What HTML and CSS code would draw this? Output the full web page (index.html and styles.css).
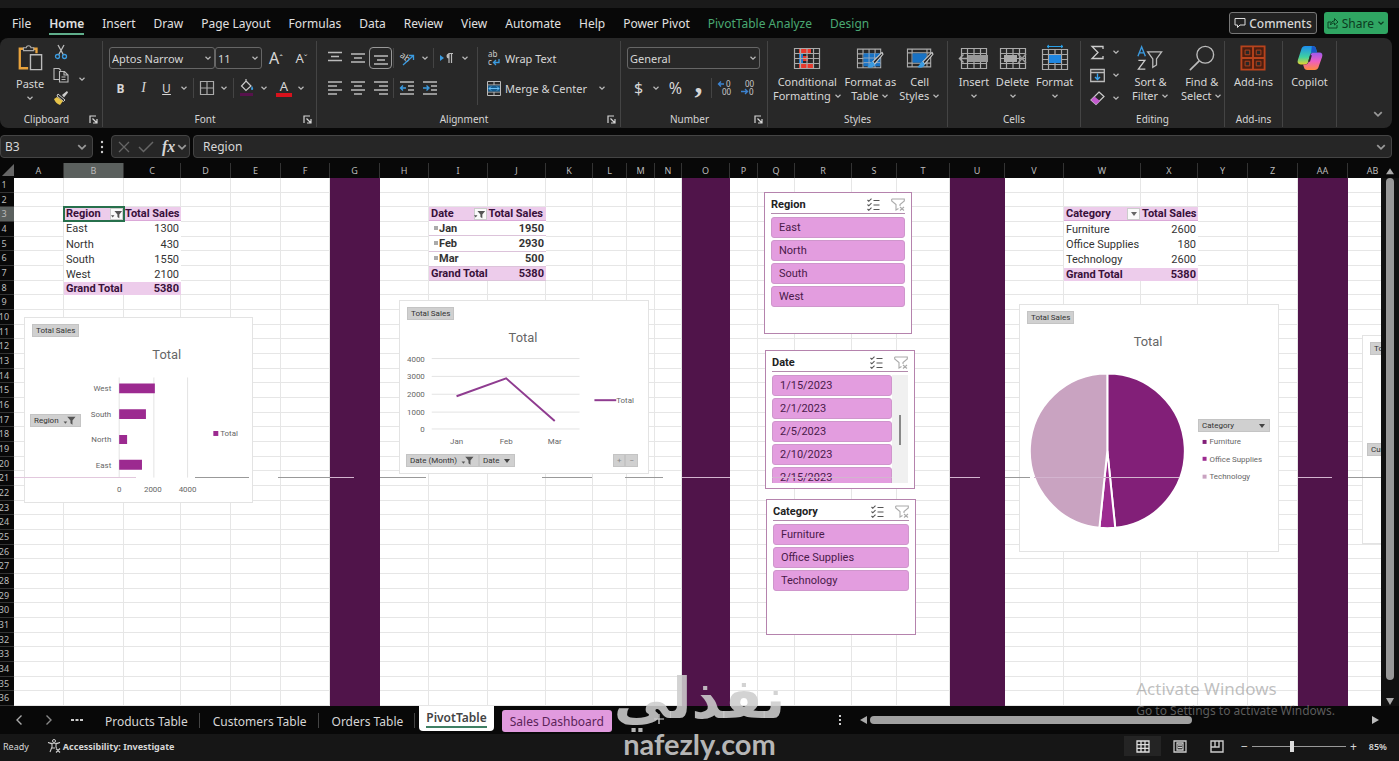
FILE: index.html
```html
<!DOCTYPE html>
<html lang="en">
<head>
  <meta charset="UTF-8">
  <meta name="viewport" content="width=device-width, initial-scale=1.0">
  <title>Sales workbook - PivotTable</title>
  <link rel="stylesheet" href="styles.css">
</head>
<body>
  <!-- Shared icons -->
  <svg class="sprite" aria-hidden="true">
    <symbol id="chev" viewBox="0 0 8 8"><path d="M1.5 2.8 4 5.2l2.5-2.4" fill="none" stroke="currentColor" stroke-width="1.2"/></symbol>
    <symbol id="launcher" viewBox="0 0 9 9"><path d="M1 8V1h6M3.5 3.5 7.5 7.5M8 4v4H4" fill="none" stroke="currentColor" stroke-width="1.2"/></symbol>
    <symbol id="funnel" viewBox="0 0 14 12"><path d="M4 2h9L9.700 6v4.500L7.500 9V6z" fill="#555"/><path d="M0 7h4L2 9.500z" fill="#555"/></symbol>
    <symbol id="multi" viewBox="0 0 14 13"><path d="m1 2 1.300 1.300L5 .7M1 6.500l1.300 1.300L5 5.200M1 11l1.300 1.300L5 9.700M7 2.500h6M7 7h6M7 11.500h6" fill="none" stroke="#555" stroke-width="1.100"/></symbol>
    <symbol id="clear" viewBox="0 0 14 13"><path d="M.7 1h12.600v2L9 6.500V8M.7 1v2L5 6.500V12l2.500-1.500M9 9l4 3.500M13 9l-4 3.500" fill="none" stroke="#aaa" stroke-width="1.100"/></symbol>
    <symbol id="table" viewBox="0 0 28 24"><path d="M1.500 2.500h25v20h-25zM1.500 7.500h25M1.500 12.500h25M1.500 17.500h25M7.500 2.500v20M14 2.500v20M20.500 2.500v20" fill="none" stroke="#aaa" stroke-width="1.200"/></symbol>
    <symbol id="brush" viewBox="0 0 20 20"><path d="M18 1 8 11l2 2.500L19 3z" fill="#282828" stroke="#ccc" stroke-width="1.200"/><path d="M8 11c-3 0-3 4-6 5.500 3 2 8 1 8-3z" fill="#3b9be0"/></symbol>
  </svg>

  <div class="title-strip"></div>

  <header class="menu-bar">
    <nav class="menu">
      <button>File</button>
      <button class="current">Home</button>
      <button>Insert</button>
      <button>Draw</button>
      <button>Page Layout</button>
      <button>Formulas</button>
      <button>Data</button>
      <button>Review</button>
      <button>View</button>
      <button>Automate</button>
      <button>Help</button>
      <button>Power Pivot</button>
      <button class="context">PivotTable Analyze</button>
      <button class="context">Design</button>
    </nav>
    <button class="comments">
      <svg width="12" height="12" viewBox="0 0 12 12"><path d="M1 1.500h10v6.500H6L3.500 10.500V8H1z" fill="none" stroke="#ddd"/></svg>
      Comments
    </button>
    <button class="share">
      <svg width="12" height="12" viewBox="0 0 12 12"><path d="M4 5H1v6h9V8M3.500 8c0-3 2-4 4-4V1.500L11 5 7.500 8V6c-2 0-3 .5-4 2z" fill="none" stroke="#0c4424"/></svg>
      Share
      <svg class="chev"><use href="#chev"/></svg>
    </button>
  </header>

  <section class="ribbon">
    <div class="group clipboard">
      <div class="tools">
        <button class="big">
          <svg width="28" height="28" viewBox="0 0 28 28"><path d="M12 25H3V4h4M17 4h4v5" fill="none" stroke="#e8a33d" stroke-width="2.500"/><path d="M7 6V3h3c0-3 5-3 5 0h3v3z" fill="#282828" stroke="#aaa" stroke-width="1.200"/><path d="M14.500 10.500h12v16h-12z" fill="#282828" stroke="#bbb" stroke-width="1.500"/></svg>
          <span>Paste</span>
          <svg class="chev"><use href="#chev"/></svg>
        </button>
        <div class="stack">
          <button aria-label="Cut"><svg width="16" height="16" viewBox="0 0 16 16"><path d="M5 1l5.500 10M11 1 5.500 11" stroke="#bbb" stroke-width="1.300" fill="none"/><circle cx="4.500" cy="12.500" r="2" fill="none" stroke="#3b9be0" stroke-width="1.300"/><circle cx="11.500" cy="12.500" r="2" fill="none" stroke="#3b9be0" stroke-width="1.300"/></svg></button>
          <button aria-label="Copy"><svg width="16" height="16" viewBox="0 0 16 16"><path d="M6 12.500H1v-11h5l2 2M6.500 4.500h5l3.500 3.500v7H6.500zM11 4.500V8h4M8.500 10h4M8.500 12.500h4" fill="none" stroke="#bbb" stroke-width="1.100"/></svg></button>
          <button aria-label="Format Painter"><svg width="16" height="16" viewBox="0 0 16 16"><path d="m9 5 5-4 1 1.500-4 5z" fill="#ccc"/><path d="m5 4 7 6-1.500 1.500L4 6z" fill="none" stroke="#ccc"/><path d="M4 7 1 9c1 3 3 5 6 6l3-4z" fill="#e6c34a"/></svg></button>
        </div>
        <button class="drop" aria-label="Copy options"><svg class="chev"><use href="#chev"/></svg></button>
      </div>
      <div class="group-name"><span>Clipboard</span><svg class="launcher"><use href="#launcher"/></svg></div>
    </div>

    <div class="group font">
      <div class="tools rows">
        <div class="row">
          <label class="combo font-name"><select aria-label="Font"><option>Aptos Narrow</option></select><svg class="chev"><use href="#chev"/></svg></label>
          <label class="combo font-size"><select aria-label="Font size"><option>11</option></select><svg class="chev"><use href="#chev"/></svg></label>
          <button class="tool grow">A<sup>ˆ</sup></button>
          <button class="tool shrink">A<sup>ˇ</sup></button>
        </div>
        <div class="row">
          <button class="tool"><b>B</b></button>
          <button class="tool serif"><i>I</i></button>
          <button class="tool"><u>U</u></button>
          <svg class="chev"><use href="#chev"/></svg>
          <span class="sep"></span>
          <button class="tool" aria-label="Borders"><svg width="16" height="16" viewBox="0 0 16 16"><path d="M1.500 1.500h13v13h-13zM8 1.500v13M1.500 8h13" fill="none" stroke="#aaa" stroke-width="1.200"/></svg></button>
          <svg class="chev"><use href="#chev"/></svg>
          <span class="sep"></span>
          <button class="tool" aria-label="Fill color"><svg width="16" height="18" viewBox="0 0 16 18"><path d="m7 2 5 5-5 4.500L2.500 7zM7 2V0" fill="none" stroke="#ccc" stroke-width="1.200"/><path d="M13 7c2 3 1 4 0 4s-1.500-1 0-4z" fill="#3b9be0"/><path d="M1 14h13v3H1z" fill="#57124c"/></svg></button>
          <svg class="chev"><use href="#chev"/></svg>
          <button class="tool font-color">A</button>
          <svg class="chev"><use href="#chev"/></svg>
        </div>
      </div>
      <div class="group-name"><span>Font</span><svg class="launcher"><use href="#launcher"/></svg></div>
    </div>

    <div class="group alignment">
      <div class="tools">
        <div class="rows">
          <div class="row">
            <button class="tool" aria-label="Top align"><svg width="16" height="16" viewBox="0 0 16 16"><path d="M1 2.500h14M4 6.500h8M1 10.500h14" stroke="#bbb" stroke-width="1.300"/></svg></button>
            <button class="tool" aria-label="Middle align"><svg width="16" height="16" viewBox="0 0 16 16"><path d="M1 4h14M4 8h8M1 12h14" stroke="#bbb" stroke-width="1.300"/></svg></button>
            <button class="tool pressed" aria-label="Bottom align"><svg width="16" height="16" viewBox="0 0 16 16"><path d="M1 6h14M4 10h8M1 14h14" stroke="#bbb" stroke-width="1.300"/></svg></button>
            <span class="sep"></span>
            <button class="tool" aria-label="Orientation"><svg width="18" height="16" viewBox="0 0 18 16"><text x="2" y="8" font-size="9" fill="#ccc" transform="rotate(35 4 6)">ab</text><path d="m5 15 10-9M11 5.500h4.500V10" fill="none" stroke="#3b9be0" stroke-width="1.300"/></svg></button>
            <svg class="chev"><use href="#chev"/></svg>
            <span class="sep"></span>
            <button class="tool" aria-label="Text direction"><svg width="16" height="14" viewBox="0 0 16 14"><path d="m1 4 4 3-4 3z" fill="#3b9be0"/><path d="M10 2.500a2.500 2.500 0 0 0 0 5z" fill="#bbb"/><path d="M14 2.500h-4V12M12.500 3v9" stroke="#bbb" fill="none" stroke-width="1.200"/></svg></button>
            <svg class="chev"><use href="#chev"/></svg>
          </div>
          <div class="row">
            <button class="tool" aria-label="Align left"><svg width="16" height="16" viewBox="0 0 16 16"><path d="M1 2h14M1 6h9M1 10h14M1 14h9" stroke="#bbb" stroke-width="1.300"/></svg></button>
            <button class="tool" aria-label="Center"><svg width="16" height="16" viewBox="0 0 16 16"><path d="M1 2h14M4 6h8M1 10h14M4 14h8" stroke="#bbb" stroke-width="1.300"/></svg></button>
            <button class="tool" aria-label="Align right"><svg width="16" height="16" viewBox="0 0 16 16"><path d="M1 2h14M6 6h9M1 10h14M6 14h9" stroke="#bbb" stroke-width="1.300"/></svg></button>
            <span class="sep"></span>
            <button class="tool" aria-label="Decrease indent"><svg width="16" height="16" viewBox="0 0 16 16"><path d="M1 2h14M9 6h6M9 10h6M1 14h14" stroke="#bbb" stroke-width="1.300"/><path d="M7 8H2M4 5.500 1.500 8 4 10.500" fill="none" stroke="#3b9be0" stroke-width="1.400"/></svg></button>
            <button class="tool" aria-label="Increase indent"><svg width="16" height="16" viewBox="0 0 16 16"><path d="M1 2h14M9 6h6M9 10h6M1 14h14" stroke="#bbb" stroke-width="1.300"/><path d="M1 8h5M4.500 5.500 7 8l-2.500 2.500" fill="none" stroke="#3b9be0" stroke-width="1.400"/></svg></button>
          </div>
        </div>
        <span class="sep tall"></span>
        <div class="rows wide">
          <div class="row">
            <button class="text-tool"><svg width="14" height="16" viewBox="0 0 14 16"><text x="1" y="7" font-size="8" fill="#ccc">ab</text><text x="1" y="15" font-size="8" fill="#ccc">c</text><path d="M12 9v3.500H7M9 10l-2.500 2.500L9 15" fill="none" stroke="#3b9be0" stroke-width="1.300"/></svg>Wrap Text</button>
          </div>
          <div class="row">
            <button class="text-tool"><svg width="14" height="15" viewBox="0 0 14 15"><path d="M.5.5h13v14H.5zM.5 4h13M.5 11h13M7 .5V4M7 11v3.500" fill="none" stroke="#bbb"/><path d="M1 4.500h12v6H1z" fill="#155a8c"/><path d="M2 7.500h10M4 5.500l-2 2 2 2M10 5.500l2 2-2 2" fill="none" stroke="#6cc0f5"/></svg>Merge &amp; Center</button>
            <svg class="chev"><use href="#chev"/></svg>
          </div>
        </div>
      </div>
      <div class="group-name"><span>Alignment</span><svg class="launcher"><use href="#launcher"/></svg></div>
    </div>

    <div class="group number">
      <div class="tools rows">
        <div class="row">
          <label class="combo number-format"><select aria-label="Number format"><option>General</option></select><svg class="chev"><use href="#chev"/></svg></label>
        </div>
        <div class="row">
          <button class="tool symbol">$</button>
          <svg class="chev"><use href="#chev"/></svg>
          <button class="tool symbol">%</button>
          <button class="tool comma">,</button>
          <span class="sep"></span>
          <button class="tool" aria-label="Increase decimal"><svg width="16" height="16" viewBox="0 0 16 16"><text x="9" y="7" font-size="8" fill="#ccc">0</text><text x="5" y="15" font-size="8" fill="#ccc">00</text><path d="M7 4H1.500M4 1.500 1.500 4 4 6.500" fill="none" stroke="#3b82d0" stroke-width="1.400"/></svg></button>
          <button class="tool" aria-label="Decrease decimal"><svg width="16" height="16" viewBox="0 0 16 16"><text x="5" y="7" font-size="8" fill="#ccc">00</text><text x="9" y="15" font-size="8" fill="#ccc">0</text><path d="M1 11.500h6M5 9l2.500 2.500L5 14" fill="none" stroke="#3b82d0" stroke-width="1.400"/></svg></button>
        </div>
      </div>
      <div class="group-name"><span>Number</span><svg class="launcher"><use href="#launcher"/></svg></div>
    </div>

    <div class="group styles">
      <div class="tools">
        <button class="big">
          <svg width="28" height="24" viewBox="0 0 28 24"><path d="M6 3h12v5H6zM6 17h14v5H6z" fill="#e8392c"/><path d="M6 8h4v9H6z" fill="#1f7ad0"/><path d="M10 10h5v5h-5z" fill="#e8392c"/><use href="#table" width="28" height="24"/></svg>
          <span>Conditional<br>Formatting <svg class="chev"><use href="#chev"/></svg></span>
        </button>
        <button class="big">
          <svg width="30" height="28" viewBox="0 0 30 28"><use href="#table" width="28" height="24" y="2"/><path d="M8 9h18v14H8z" fill="#1872c4"/><path d="M14 9v14M20 9v14M8 14h18M8 19h18" stroke="#9ab" fill="none"/><use href="#brush" x="10" y="7" width="20" height="20"/></svg>
          <span>Format as<br>Table <svg class="chev"><use href="#chev"/></svg></span>
        </button>
        <button class="big">
          <svg width="30" height="28" viewBox="0 0 30 28"><path d="M1.500 4.500h25v19h-25zM1.500 8.500h25M1.500 19.500h25M6.500 4.500v19M22.500 4.500v19" stroke="#aaa" fill="none" stroke-width="1.200"/><path d="M7 9h15v10H7z" fill="#1872c4"/><use href="#brush" x="10" y="7" width="20" height="20"/></svg>
          <span>Cell<br>Styles <svg class="chev"><use href="#chev"/></svg></span>
        </button>
      </div>
      <div class="group-name"><span>Styles</span></div>
    </div>

    <div class="group cells">
      <div class="tools">
        <button class="big">
          <svg width="30" height="24" viewBox="0 0 30 24"><use href="#table" width="28" height="24" x="1"/><path d="M9 9h20v7H9z" fill="#999"/><path d="M9 12.500H1M4.500 8.500l-4 4 4 4" fill="none" stroke="#aaa" stroke-width="1.500"/></svg>
          <span>Insert</span><svg class="chev"><use href="#chev"/></svg>
        </button>
        <button class="big">
          <svg width="28" height="24" viewBox="0 0 28 24"><use href="#table" width="28" height="24"/><path d="M5 9h13v7H5z" fill="#aaa"/><path d="m19 8 8 9M27 8l-8 9" stroke="#999" stroke-width="1.500"/></svg>
          <span>Delete</span><svg class="chev"><use href="#chev"/></svg>
        </button>
        <button class="big">
          <svg width="28" height="26" viewBox="0 0 28 26"><use href="#table" width="28" height="24" y="2"/><path d="M8 10h12v8H8z" fill="#1f86e0"/><path d="M6 1.500h16M8 0 6 1.500 8 3M20 0l2 1.500L20 3" stroke="#2aa0e8" fill="none"/></svg>
          <span>Format</span><svg class="chev"><use href="#chev"/></svg>
        </button>
      </div>
      <div class="group-name"><span>Cells</span></div>
    </div>

    <div class="group editing">
      <div class="tools">
        <div class="stack pairs">
          <button aria-label="AutoSum"><svg width="15" height="15" viewBox="0 0 15 15"><path d="M13 4V1.500H2L8 7.500 2 13.500h11V11" fill="none" stroke="#ccc" stroke-width="1.300"/></svg><svg class="chev"><use href="#chev"/></svg></button>
          <button aria-label="Fill"><svg width="15" height="15" viewBox="0 0 15 15"><path d="M.7 1.500h13.600v12H.7zM.7 4.500h13.600" fill="none" stroke="#bbb" stroke-width="1.300"/><path d="M7.500 5.500v6M5 9l2.500 2.500L10 9" fill="none" stroke="#3ba4ee" stroke-width="1.400"/></svg><svg class="chev"><use href="#chev"/></svg></button>
          <button aria-label="Clear"><svg width="15" height="15" viewBox="0 0 15 15"><path d="m9 1 5 4.500-8 8L1 9z" fill="none" stroke="#ccc" stroke-width="1.200"/><path d="M4.500 5.500 10 10l-4 3.500L1 9z" fill="#c45bd0"/></svg><svg class="chev"><use href="#chev"/></svg></button>
        </div>
        <button class="big">
          <svg width="28" height="28" viewBox="0 0 28 28"><path d="m1 12 4-10 4 10M2.500 8.500h5" fill="none" stroke="#3b9be0" stroke-width="1.500"/><path d="M1.500 16.500h7L1.500 26H9" fill="none" stroke="#ccc" stroke-width="1.400"/><path d="M11.500 7.500h15L21 15v6.500l-4 2.500v-9z" fill="none" stroke="#bbb" stroke-width="1.400"/></svg>
          <span>Sort &amp;<br>Filter <svg class="chev"><use href="#chev"/></svg></span>
        </button>
        <button class="big">
          <svg width="28" height="28" viewBox="0 0 28 28"><circle cx="17.500" cy="10.500" r="9" fill="none" stroke="#bbb" stroke-width="1.500"/><path d="M11 17 1 27" stroke="#bbb" stroke-width="1.800"/></svg>
          <span>Find &amp;<br>Select <svg class="chev"><use href="#chev"/></svg></span>
        </button>
      </div>
      <div class="group-name"><span>Editing</span></div>
    </div>

    <div class="group addins">
      <div class="tools">
        <button class="big">
          <svg width="28" height="28" viewBox="0 0 28 28"><path d="M1.500 1.500h25v25h-25zM14 1.500v25M1.500 14h25" fill="#4a1e10" stroke="#b8431c" stroke-width="2"/><path d="M5.500 5.500h5v5h-5zM17.500 5.500h5v5h-5zM5.500 17.500h5v5h-5zM17.500 17.500h5v5h-5z" fill="#282828" stroke="#b8431c"/></svg>
          <span>Add-ins</span>
        </button>
      </div>
      <div class="group-name"><span>Add-ins</span></div>
    </div>

    <div class="group copilot">
      <div class="tools">
        <button class="big">
          <svg width="28" height="28" viewBox="0 0 28 28">
            <defs>
              <linearGradient id="cool" x1="0" y1="0" x2="0" y2="1"><stop offset="0" stop-color="#1c8df0"/><stop offset=".6" stop-color="#3fd0a0"/><stop offset="1" stop-color="#e8d22c"/></linearGradient>
              <linearGradient id="warm" x1="0" y1="0" x2="0" y2="1"><stop offset="0" stop-color="#9a5af0"/><stop offset=".5" stop-color="#ee5ec0"/><stop offset="1" stop-color="#ff8a3c"/></linearGradient>
            </defs>
            <path d="M9 1h8c2 0 3 1 3.500 3l1 4h-4c-2 0-3 1-3.500 3l-2 7c-.5 2-1.500 3-3.500 3H4c-3 0-4-2-3-5L4.500 5C5 2.500 6.500 1 9 1z" fill="url(#cool)"/>
            <path d="M19 27h-8c-2 0-3-1-3.500-3l-1-3H9c2 0 3-1 3.500-3l2-7c.5-2 1.500-3 3.500-3h6c3 0 4 2 3 5l-3.500 10c-.5 2.500-2 4-4.500 4z" fill="url(#warm)"/>
            <path d="M16 1c3 0 4 1 4.500 3l1 4H18c-2 0-2.500 0-3 1z" fill="#1958c8"/>
            <path d="m14 11 2 0-2 7h-2z" fill="#282828"/>
          </svg>
          <span>Copilot</span>
        </button>
      </div>
      <div class="group-name"></div>
    </div>
    <button class="collapse" aria-label="Collapse ribbon"><svg class="chev"><use href="#chev"/></svg></button>
  </section>

  <section class="formula-bar">
    <label class="name-box"><input type="text" value="B3" aria-label="Name box"><svg class="chev"><use href="#chev"/></svg></label>
    <svg width="4" height="14" viewBox="0 0 4 14" fill="#ccc"><circle cx="2" cy="2" r="1.200"/><circle cx="2" cy="7" r="1.200"/><circle cx="2" cy="12" r="1.200"/></svg>
    <div class="fx">
      <button aria-label="Cancel"><svg width="12" height="12" viewBox="0 0 12 12"><path d="m1 1 10 10M11 1 1 11" stroke="#666" stroke-width="1.300"/></svg></button>
      <button aria-label="Enter"><svg width="16" height="12" viewBox="0 0 16 12"><path d="m1 6 4.500 4.500L15 1" fill="none" stroke="#666" stroke-width="1.500"/></svg></button>
      <button class="fx-sign"><i>fx</i></button>
      <svg class="chev"><use href="#chev"/></svg>
    </div>
    <label class="formula"><input type="text" value="Region" aria-label="Formula"><svg class="chev"><use href="#chev"/></svg></label>
  </section>

  <main class="workbook">
    <div class="head-row">
      <div class="corner"></div>
      <div class="col-heads" id="col-heads"></div>
      <div class="scroll-up"></div>
    </div>
    <div class="body-row">
      <div class="row-heads" id="row-heads"></div>
      <div class="sheet">
        <div class="cells-grid" id="cells-grid">
          <table class="pivot by-region">
            <thead><tr><th class="active">Region <button class="filter" aria-label="Filter region"><svg width="12" height="11"><use href="#funnel"/></svg></button></th><th>Total Sales</th></tr></thead>
            <tbody>
              <tr><td>East</td><td>1300</td></tr>
              <tr><td>North</td><td>430</td></tr>
              <tr><td>South</td><td>1550</td></tr>
              <tr><td>West</td><td>2100</td></tr>
            </tbody>
            <tfoot><tr><td>Grand Total</td><td>5380</td></tr></tfoot>
          </table>

          <table class="pivot by-date">
            <thead><tr><th>Date <button class="filter" aria-label="Filter date"><svg width="12" height="11"><use href="#funnel"/></svg></button></th><th>Total Sales</th></tr></thead>
            <tbody>
              <tr><td><span class="expand"></span>Jan</td><td>1950</td></tr>
              <tr><td><span class="expand"></span>Feb</td><td>2930</td></tr>
              <tr><td><span class="expand"></span>Mar</td><td>500</td></tr>
            </tbody>
            <tfoot><tr><td>Grand Total</td><td>5380</td></tr></tfoot>
          </table>

          <table class="pivot by-category">
            <thead><tr><th>Category <button class="filter" aria-label="Filter category"><svg width="8" height="6" viewBox="0 0 8 6"><path d="M1 1h6L4 5z" fill="#666"/></svg></button></th><th>Total Sales</th></tr></thead>
            <tbody>
              <tr><td>Furniture</td><td>2600</td></tr>
              <tr><td>Office Supplies</td><td>180</td></tr>
              <tr><td>Technology</td><td>2600</td></tr>
            </tbody>
            <tfoot><tr><td>Grand Total</td><td>5380</td></tr></tfoot>
          </table>
        </div>

        <!-- Floating charts -->
        <figure class="chart bar-chart">
          <svg viewBox="0 0 229 185">
            <text class="title" x="143" y="41">Total</text>
            <path class="axis" d="M95 60v101M130 60v101M164 60v101"/>
            <g fill="#9c2a90"><path d="M95 66h36v10H95zM95 92h27v10H95zM95 118h8v9h-8zM95 143h23v10H95z"/><path d="M190 114h5v5h-5z"/></g>
            <g text-anchor="end"><text x="87" y="74">West</text><text x="87" y="100">South</text><text x="87" y="125">North</text><text x="87" y="151">East</text></g>
            <g text-anchor="middle"><text x="95" y="176">0</text><text x="129" y="176">2000</text><text x="164" y="176">4000</text></g>
            <text x="197" y="119">Total</text>
          </svg>
          <button class="field at-top">Total Sales</button>
          <button class="field region-field">Region <svg width="14" height="11"><use href="#funnel"/></svg></button>
        </figure>

        <figure class="chart line-chart">
          <svg viewBox="0 0 250 174">
            <text class="title" x="124" y="41">Total</text>
            <path class="axis" d="M32 58h149M32 76h149M32 94h149M32 112h149M32 129h149"/>
            <path d="m57 96 50-18 49 43" fill="none" stroke="#8f3c90" stroke-width="2"/>
            <path d="M196 100h22" stroke="#8f3c90" stroke-width="2"/>
            <g text-anchor="end"><text x="25" y="61">4000</text><text x="25" y="79">3000</text><text x="25" y="97">2000</text><text x="25" y="115">1000</text><text x="25" y="132">0</text></g>
            <g text-anchor="middle"><text x="57" y="144">Jan</text><text x="107" y="144">Feb</text><text x="156" y="144">Mar</text></g>
            <text x="218" y="103">Total</text>
          </svg>
          <button class="field at-top">Total Sales</button>
          <div class="fields">
            <button class="field">Date (Month) <svg width="14" height="11"><use href="#funnel"/></svg></button>
            <button class="field">Date <svg width="8" height="6" viewBox="0 0 8 6"><path d="M1 1h6L4 5z" fill="#444"/></svg></button>
            <button class="field dim">+</button><button class="field dim">−</button>
          </div>
        </figure>

        <figure class="chart pie-chart">
          <svg viewBox="0 0 260 248">
            <text class="title" x="129" y="41">Total</text>
            <g stroke="#fff" stroke-width="2">
              <path d="M88 147V69a78 78 0 0 1 8 155.600z" fill="#821f78"/>
              <path d="M88 147 96 224.600a78 78 0 0 1-16 0z" fill="#9c2a90"/>
              <path d="M88 147 80 224.600A78 78 0 0 1 88 69z" fill="#c9a3c1"/>
            </g>
            <path d="M184 136h4v4h-4z" fill="#821f78"/><path d="M184 153h4v4h-4z" fill="#9c2a90"/><path d="M184 171h4v4h-4z" fill="#c9a3c1"/>
            <text x="191" y="140">Furniture</text><text x="191" y="158">Office Supplies</text><text x="191" y="175">Technology</text>
          </svg>
          <button class="field at-top">Total Sales</button>
          <button class="field category-field">Category <svg width="8" height="6" viewBox="0 0 8 6"><path d="M1 1h6L4 5z" fill="#444"/></svg></button>
        </figure>

        <figure class="chart next-chart">
          <button class="field at-top">Total Sales</button>
          <button class="field customer-field">Customer</button>
        </figure>

        <!-- Slicers -->
        <section class="slicer region-slicer">
          <header><h2>Region</h2><button aria-label="Multi-select"><svg width="15" height="13"><use href="#multi"/></svg></button><button aria-label="Clear filter"><svg width="14" height="13"><use href="#clear"/></svg></button></header>
          <div class="choices">
            <button>East</button><button>North</button><button>South</button><button>West</button>
          </div>
        </section>
        <section class="slicer date-slicer">
          <header><h2>Date</h2><button aria-label="Multi-select"><svg width="15" height="13"><use href="#multi"/></svg></button><button aria-label="Clear filter"><svg width="14" height="13"><use href="#clear"/></svg></button></header>
          <div class="scroller">
            <div class="choices">
              <button>1/15/2023</button><button>2/1/2023</button><button>2/5/2023</button><button>2/10/2023</button><button>2/15/2023</button>
            </div>
            <div class="track"><span></span></div>
          </div>
        </section>
        <section class="slicer category-slicer">
          <header><h2>Category</h2><button aria-label="Multi-select"><svg width="15" height="13"><use href="#multi"/></svg></button><button aria-label="Clear filter"><svg width="14" height="13"><use href="#clear"/></svg></button></header>
          <div class="choices">
            <button>Furniture</button><button>Office Supplies</button><button>Technology</button>
          </div>
        </section>

        <!-- Page break line under row 21 -->
        <svg class="page-break" viewBox="0 0 1367 1" preserveAspectRatio="none">
          <path d="M0 0h122" stroke="#e2c8dd"/>
          <path d="M181 0h54M264 0h52M366 0h46M528 0h50M611 0h38M991 0h25M1334 0h33" stroke="#999"/>
          <path d="M316 0h24M668 0h48M758 0h120M936 0h30M1020 0h145M1284 0h34" stroke="#d3b4cf"/>
        </svg>
      </div>
      <div class="v-scroll"><span class="thumb"></span><span class="arrow-down"></span></div>
    </div>
  </main>

  <nav class="sheet-tabs">
    <button class="step" aria-label="Previous sheet"><svg width="8" height="12" viewBox="0 0 8 12"><path d="M6.500 1.500 2 6l4.500 4.500" fill="none" stroke="#aaa" stroke-width="1.400"/></svg></button>
    <button class="step" aria-label="Next sheet"><svg width="8" height="12" viewBox="0 0 8 12"><path d="M1.500 1.500 6 6l-4.500 4.500" fill="none" stroke="#888" stroke-width="1.400"/></svg></button>
    <button class="more" aria-label="More sheets"><svg width="12" height="12" viewBox="0 0 12 12" fill="#ccc"><path d="M0 5h3v2H0zM4.500 5h3v2h-3zM9 5h3v2H9z"/></svg></button>
    <button class="tab">Products Table</button>
    <button class="tab">Customers Table</button>
    <button class="tab">Orders Table</button>
    <button class="tab open"><span>PivotTable</span></button>
    <button class="tab pink">Sales Dashboard</button>
    <button class="add" aria-label="New sheet"><svg width="12" height="12" viewBox="0 0 12 12"><path d="M6 1v10M1 6h10" stroke="#ddd" stroke-width="1.200"/></svg></button>
    <div class="h-scroll">
      <svg width="4" height="12" viewBox="0 0 4 12" fill="#ccc"><path d="M1 1h2v2H1zM1 5h2v2H1zM1 9h2v2H1z"/></svg>
      <span class="arrow-left"></span>
      <span class="track"><span class="thumb"></span></span>
      <span class="arrow-right"></span>
    </div>
  </nav>

  <footer class="status-bar">
    <span>Ready</span>
    <button class="access">
      <svg width="14" height="14" viewBox="0 0 14 14"><circle cx="7" cy="2" r="1.500" fill="none" stroke="#ccc"/><path d="M1 3.500 5 5v3l-2 5M13 3.500 9 5v3l.5 1M1 3.500c3 1 9 1 12 0M9 9.500l4 4M13 9.500l-4 4M5 9h3" fill="none" stroke="#ccc" stroke-width="1.100"/></svg>
      Accessibility: Investigate
    </button>
    <div class="views">
      <button class="on" aria-label="Normal"><svg width="14" height="13" viewBox="0 0 14 13"><path d="M1 1h12v11H1zM5 1v11M9 1v11M1 4.700h12M1 8.300h12" fill="none" stroke="#ddd" stroke-width="1.300"/></svg></button>
      <button aria-label="Page Layout"><svg width="14" height="13" viewBox="0 0 14 13"><path d="M1 1h12v11H1zM4 3h6v7H4zM5 5h4M5 7.500h4" fill="none" stroke="#ccc" stroke-width="1.300"/></svg></button>
      <button aria-label="Page Break Preview"><svg width="14" height="13" viewBox="0 0 14 13"><path d="M1 1h12v11H1zM5 1v6M9 1v6H1" fill="none" stroke="#ccc" stroke-width="1.400"/></svg></button>
    </div>
    <div class="zoom">
      <button aria-label="Zoom out">−</button>
      <input type="range" min="0" max="100" value="42" aria-label="Zoom">
      <button aria-label="Zoom in">+</button>
      <output>85%</output>
    </div>
  </footer>

  <div class="activate">
    <p>Activate Windows</p>
    <p class="small">Go to Settings to activate Windows.</p>
  </div>
  <div class="watermark">
    <span class="arabic" lang="ar" dir="rtl">نفذلي</span>
    <span class="latin">nafezly.com</span>
  </div>

  <script src="script.js"></script>
</body>
</html>
```
FILE: styles.css
```css
* {
  box-sizing: border-box;
}

body {
  margin: 0;
  height: 100vh;
  display: flex;
  flex-direction: column;
  overflow: hidden;
  background: #080808;
  color: #d6d6d6;
  font-family: "Noto Sans", "Open Sans", sans-serif;
  font-size: 12px;
}

button, input, select {
  font: inherit;
  color: inherit;
  background: none;
  border: 0;
  padding: 0;
  margin: 0;
}

button {
  white-space: nowrap;
}

svg {
  flex: none;
  overflow: visible;
}

.sprite {
  position: absolute;
  width: 0;
  height: 0;
}

.chev {
  width: 8px;
  height: 8px;
  color: #bbb;
}

/* Menu */
.title-strip {
  height: 8px;
  background: #1a1a1a;
}

.menu-bar {
  display: flex;
  align-items: center;
  height: 30px;
  padding: 0 11px 0 12px;
}

.menu {
  display: flex;
  flex: 1;
  gap: 18px;
}

.menu button {
  height: 24px;
  padding-top: 3px;
  color: #e0e0e0;
  border-bottom: 2px solid transparent;
}

.menu .current {
  font-weight: 600;
  border-color: #5fae8b;
}

.menu .context {
  color: #4aa873;
}

.comments, .share {
  display: flex;
  align-items: center;
  gap: 3px;
  height: 22px;
  border-radius: 3px;
}

.comments {
  padding: 0 4px;
  margin-right: 7px;
  background: #222;
  border: 1px solid #777;
  font-weight: 500;
}

.share {
  padding: 0 3px;
  background: #2fa562;
  color: #0c3a20;
}

.share .chev {
  color: #0c3a20;
}

/* Ribbon */
.ribbon {
  display: flex;
  height: 90px;
  margin-right: 7px;
  padding: 3px 0 1px;
  background: #282828;
  border-radius: 8px;
}

.group {
  display: flex;
  flex-direction: column;
  flex: none;
  border-right: 1px solid #444;
}

.clipboard { width: 103px; }
.font { width: 214px; }
.alignment { width: 304px; }
.number { width: 147px; }
.styles { width: 180px; }
.cells { width: 133px; }
.editing { width: 144px; }
.addins { width: 58px; }
.copilot { width: 54px; }

.tools {
  display: flex;
  flex: 1;
  min-height: 0;
}

.group-name {
  display: flex;
  align-items: center;
  height: 16px;
  padding: 0 4px;
  font-size: 10px;
}

.group-name span {
  flex: 1;
  text-align: center;
}

.launcher {
  width: 9px;
  height: 9px;
}

.big {
  display: flex;
  flex-direction: column;
  align-items: center;
  padding-top: 4px;
  font-size: 11px;
  line-height: 14px;
}

.big > svg:first-child {
  height: 26px;
  margin-bottom: 4px;
}

.big > .chev {
  margin-top: 3px;
}

.clipboard .tools {
  padding-left: 16px;
}

.clipboard .big > svg:first-child {
  margin-bottom: 6px;
}

.stack {
  display: flex;
  flex-direction: column;
  gap: 7px;
  padding: 3px 0 0 9px;
}

.stack button {
  display: flex;
  height: 16px;
}

.pairs button {
  align-items: center;
  justify-content: space-between;
  width: 30px;
}

.drop {
  width: 26px;
  padding-top: 4px;
}

.rows {
  display: flex;
  flex-direction: column;
  gap: 8px;
  padding-top: 6px;
}

.row {
  display: flex;
  align-items: center;
  height: 22px;
}

.font .rows {
  padding-left: 6px;
}

.tool {
  display: flex;
  align-items: center;
  justify-content: center;
  width: 23px;
  height: 22px;
}

.pressed {
  border: 1px solid #999;
  border-radius: 4px;
}

.sep {
  width: 1px;
  height: 20px;
  margin: 0 4px 0 5px;
  background: #444;
}

.font .sep {
  margin: 0 1px 0 5px;
}

.font .tool + .chev {
  margin-left: 2px;
}

.combo {
  display: flex;
  align-items: center;
  height: 22px;
  padding: 0 2px;
  border: 1px solid #666;
  border-radius: 3px;
  font-size: 11px;
}

.combo select {
  flex: 1;
  min-width: 0;
  appearance: none;
  outline: 0;
}

.font-name { width: 106px; }
.font-size { width: 47px; }

.number-format {
  width: 133px;
}

.grow {
  width: 28px;
  font-size: 16px;
}

.shrink {
  font-size: 13px;
}

.grow sup, .shrink sup {
  font-size: 9px;
}

.serif {
  font-family: "Liberation Serif", serif;
  font-size: 14px;
}

.font-color {
  height: 18px;
  width: 16px;
  margin: 0 3px 0 8px;
  border-bottom: 4px solid #d8121c;
  font-size: 13px;
}

.alignment .tools > .rows:first-child {
  width: 156px;
  padding-left: 6px;
}

.alignment .tool + .chev {
  margin: 0 3px;
}

.alignment .sep {
  margin: 0 1px;
}

.alignment .tall {
  height: 58px;
  margin: 6px 9px 0 4px;
}

.text-tool {
  display: flex;
  align-items: center;
  gap: 4px;
  font-size: 11px;
}

.text-tool + .chev {
  margin-left: 11px;
}

.number .rows {
  padding-left: 6px;
}

.symbol {
  font-size: 16px;
}

.comma {
  padding-bottom: 12px;
  font-family: "Liberation Serif", serif;
  font-size: 32px;
  font-weight: bold;
  line-height: 8px;
}

.number .tool + .chev {
  margin: 0 4px 0 2px;
}

.number .sep {
  margin: 0 1px;
}

.styles .tools {
  gap: 3px;
  padding-left: 5px;
}

.cells .tools {
  justify-content: space-evenly;
  padding-left: 4px;
}

.editing .tools {
  gap: 12px;
}

.addins .tools, .copilot .tools {
  justify-content: center;
}

.collapse {
  align-self: flex-end;
  margin: 0 8px 3px auto;
}

.collapse .chev, .formula-bar .chev {
  width: 12px;
  height: 12px;
  color: #999;
}

/* Formula bar */
.formula-bar {
  display: flex;
  align-items: center;
  height: 23px;
  margin: 7px 7px 5px 0;
}

.name-box, .fx, .formula {
  display: flex;
  align-items: center;
  height: 23px;
  padding: 0 4px;
  background: #262626;
  border: 1px solid #444;
  border-radius: 4px;
}

.name-box {
  width: 93px;
  margin-right: 7px;
}

.name-box input, .formula input {
  flex: 1;
  min-width: 0;
  outline: 0;
}

.fx {
  gap: 8px;
  width: 79px;
  margin: 0 3px 0 7px;
  padding: 0 0 0 6px;
}

.fx button {
  display: flex;
}

.fx .chev {
  margin-left: -7px;
}

.fx-sign {
  font-family: "Liberation Serif", serif;
  font-size: 16px;
  font-weight: bold;
}

.formula {
  flex: 1;
  padding-left: 9px;
}

/* Sheet */
.workbook {
  display: flex;
  flex-direction: column;
  flex: 1;
  min-height: 0;
  overflow: hidden;
}

.head-row, .body-row {
  display: flex;
}

.head-row {
  height: 15px;
}

.body-row {
  flex: 1;
  min-height: 0;
}

.corner {
  width: 14px;
  margin-bottom: 2px;
  background: linear-gradient(135deg, transparent 55%, #666 56%);
}

.col-heads, .cells-grid {
  display: grid;
  grid-template-columns: 50px 60px 57px 50px 50px 49px 50px 49px 59px 58px 47px 34px 28px 27px 48px 28px 37px 57px 45px 53px 55px 59px 77px 57px 50px 50px 50px 50px;
}

.col-heads {
  flex: 1;
  overflow: hidden;
  color: #bbb;
  font-size: 9px;
  line-height: 15px;
  text-align: center;
}

.col-heads span {
  border-right: 1px solid #333;
}

.col-heads .selected {
  background: #5b605e;
}

.scroll-up {
  width: 18px;
  background: #aaa;
  clip-path: polygon(50% 35%, 72% 75%, 28% 75%);
}

.row-heads {
  display: grid;
  grid-template-rows: repeat(36, minmax(0, 1fr));
  width: 20px;
  margin-left: -6px;
  color: #bbb;
  font-size: 9px;
  line-height: 14px;
  text-align: center;
}

.row-heads span {
  border-bottom: 1px solid #333;
}

.row-heads .selected {
  background: #5b605e;
}

.sheet {
  position: relative;
  flex: 1;
  min-width: 0;
  overflow: hidden;
  background: #fff;
  color: #333;
  font-family: Roboto, "Liberation Sans", sans-serif;
  font-size: 11px;
}

.cells-grid {
  height: 100%;
  grid-template-rows: repeat(36, minmax(0, 1fr));
}

.col-line {
  grid-row: 1 / -1;
  border-right: 1px solid #e6e6e6;
}

.row-line {
  grid-column: 1 / -1;
  border-bottom: 1px solid #e6e6e6;
}

.divider {
  background: #50144a;
  border: 0;
  z-index: 1;
}

.pivot {
  z-index: 1;
  width: 100%;
  height: 100%;
  table-layout: fixed;
  border-collapse: collapse;
  background: #fff;
  line-height: 13px;
}

.pivot th, .pivot td {
  padding: 0 2px;
  text-align: left;
  white-space: nowrap;
}

.pivot td:last-child {
  text-align: right;
}

.pivot th:last-child {
  padding: 0 1px;
}

.pivot thead th, .pivot tfoot td {
  background: #edcceb;
  color: #38103a;
  font-weight: bold;
}

.pivot thead th {
  border-bottom: 1px solid #dba8d8;
}

.pivot th:first-child {
  position: relative;
}

.by-region {
  grid-area: 3 / 2 / 9 / 4;
}

.by-region th:first-child {
  width: 60px;
}

.by-date {
  grid-area: 3 / 9 / 8 / 11;
}

.by-date td {
  font-weight: bold;
  border-bottom: 1px solid #dcc3da;
}

.by-category {
  grid-area: 3 / 23 / 8 / 25;
}

.by-category th:first-child {
  width: 77px;
}

.pivot .active {
  outline: 2px solid #27704c;
  outline-offset: -1px;
}

.filter {
  position: absolute;
  top: 1px;
  right: 1px;
  display: flex;
  align-items: center;
  justify-content: center;
  width: 13px;
  height: 12px;
  background: #fafafa;
  border: 1px solid #ccc;
}

.expand {
  display: inline-block;
  width: 4px;
  height: 4px;
  margin: 0 1px 2px 3px;
  background: #aaa;
}

.chart, .slicer {
  position: absolute;
  z-index: 2;
  margin: 0;
  background: #fff;
}

.chart {
  border: 1px solid #e3e3e3;
}

.chart > svg {
  display: block;
  width: 100%;
  font-size: 8px;
  fill: #666;
}

.chart .title {
  font-size: 13px;
  text-anchor: middle;
}

.chart .axis {
  fill: none;
  stroke: #e3e3e3;
}

.bar-chart { left: 10px; top: 139px; width: 229px; height: 186px; }
.line-chart { left: 385px; top: 122px; width: 250px; height: 174px; }
.pie-chart { left: 1005px; top: 126px; width: 260px; height: 248px; }
.next-chart { left: 1348px; top: 157px; width: 240px; height: 209px; }

.field {
  display: flex;
  align-items: center;
  gap: 4px;
  height: 13px;
  padding: 0 3px;
  background: #d0d0d0;
  border: 1px solid #c4c4c4;
  color: #333;
  font-size: 8px;
}

.at-top, .region-field, .category-field, .customer-field, .fields {
  position: absolute;
}

.at-top {
  left: 7px;
  top: 6px;
}

.region-field {
  left: 5px;
  top: 96px;
}

.category-field {
  left: 178px;
  top: 114px;
  width: 72px;
  justify-content: space-between;
}

.customer-field {
  left: 4px;
  top: 107px;
}

.fields {
  display: flex;
  left: 6px;
  right: 10px;
  bottom: 6px;
}

.fields .dim {
  color: #888;
}

.fields .dim:nth-child(3) {
  margin-left: auto;
}

.slicer {
  display: flex;
  flex-direction: column;
  gap: 3px;
  padding: 2px 6px 5px;
  border: 1px solid #b583ad;
}

.region-slicer { left: 750px; top: 14px; width: 148px; height: 142px; }
.date-slicer { left: 751px; top: 172px; width: 150px; height: 139px; }
.category-slicer { left: 752px; top: 321px; width: 150px; height: 136px; }

.slicer header {
  display: flex;
  align-items: center;
  gap: 10px;
  height: 19px;
  border-bottom: 1px solid #b28aac;
}

.slicer h2 {
  flex: 1;
  margin: 0;
  font-size: 11px;
  color: #222;
}

.slicer header button {
  display: flex;
}

.choices {
  display: flex;
  flex: 1;
  flex-direction: column;
  gap: 2px;
}

.choices button {
  flex: none;
  height: 21px;
  padding: 0 7px;
  background: #e39ddf;
  border: 1px solid #cf96cc;
  border-radius: 3px;
  color: #4a1a4a;
  text-align: left;
}

.scroller {
  display: flex;
  flex: 1;
  min-height: 0;
  overflow: hidden;
}

.scroller .track {
  width: 16px;
  padding: 40px 7px;
  background: #f0f0f0;
}

.scroller .track span {
  display: block;
  width: 2px;
  height: 30px;
  background: #888;
}

.page-break {
  position: absolute;
  z-index: 3;
  left: 0;
  top: 299px;
  width: 100%;
  height: 1px;
  overflow: hidden;
}

.page-break path {
  stroke-width: 2;
}

.v-scroll {
  display: flex;
  flex-direction: column;
  align-items: center;
  width: 18px;
  background: #111;
}

.v-scroll .thumb {
  flex: 1;
  width: 8px;
  margin-bottom: 18px;
  background: #989898;
  border-radius: 4px;
}

.arrow-down {
  margin-bottom: 1px;
  border: 4px solid transparent;
  border-top: 7px solid #aaa;
  border-bottom: 0;
}

/* Sheet tabs */
.sheet-tabs {
  display: flex;
  height: 28px;
  padding-left: 11px;
}

.step {
  width: 30px;
  padding-right: 14px;
}

.more {
  width: 21px;
  padding-right: 9px;
}

.step, .more {
  display: flex;
  align-items: center;
  justify-content: center;
}

.sheet-tabs .tab {
  position: relative;
  padding: 2px 12px 0 13px;
}

.tab:not(.open, .pink)::after {
  content: "";
  position: absolute;
  right: 0;
  top: 7px;
  height: 15px;
  border-right: 1px solid #444;
}

.sheet-tabs .open {
  height: 25px;
  margin-left: 4px;
  padding: 0 7px;
  background: #fff;
  border-radius: 0 0 4px 4px;
  color: #444;
  font-weight: 600;
}

.open span {
  display: block;
  border-bottom: 2px solid #3f7f63;
}

.sheet-tabs .pink {
  height: 22px;
  margin: 4px 0 0 8px;
  padding: 0 8px;
  background: #e19ade;
  border-radius: 3px;
  color: #5a2358;
}

.add {
  margin-left: 41px;
}

.h-scroll {
  display: flex;
  align-items: center;
  width: 41%;
  margin-left: auto;
  padding: 0 20px 0 8px;
}

.h-scroll .track {
  flex: 1;
  margin: 0 6px 0 3px;
}

.h-scroll .thumb {
  display: block;
  width: 65%;
  height: 8px;
  background: #a0a0a0;
  border-radius: 4px;
}

.arrow-left {
  margin-left: 18px;
  border: 4px solid transparent;
  border-right: 7px solid #aaa;
  border-left: 0;
}

.arrow-right {
  border: 4px solid transparent;
  border-left: 7px solid #bbb;
  border-right: 0;
}

/* Status bar */
.status-bar {
  display: flex;
  align-items: center;
  height: 27px;
  padding: 0 12px 3px 3px;
  background: #161616;
  font-size: 9px;
}

.access {
  display: flex;
  align-items: center;
  gap: 2px;
  margin-left: 18px;
  font-weight: 700;
}

.views {
  display: flex;
  margin-left: auto;
}

.views button {
  width: 37px;
  height: 20px;
  padding-top: 3px;
}

.views .on {
  background: #242424;
}

.zoom {
  display: flex;
  align-items: center;
  gap: 4px;
  margin-left: 6px;
}

.zoom button {
  font-size: 12px;
}

.zoom input {
  appearance: none;
  width: 94px;
  height: 1px;
  background: #999;
}

.zoom input::-webkit-slider-thumb {
  appearance: none;
  width: 4px;
  height: 11px;
  background: #ddd;
}

.zoom output {
  margin-left: 8px;
  font-weight: 600;
}

/* Overlays */
.activate {
  position: absolute;
  z-index: 5;
  right: 64px;
  bottom: 39px;
  color: rgba(150, 150, 150, .6);
  font-size: 17px;
  line-height: 22px;
}

.activate p {
  margin: 0;
}

.activate .small {
  font-size: 12px;
}

.watermark {
  position: absolute;
  z-index: 6;
  left: 50%;
  bottom: 0;
  display: flex;
  flex-direction: column;
  align-items: center;
  transform: translateX(-50%);
  color: rgba(205, 205, 205, .88);
  font-weight: bold;
}

.arabic {
  font-family: "DejaVu Sans", sans-serif;
  font-size: 56px;
  line-height: 56px;
}

.latin {
  font-family: Lato, sans-serif;
  font-size: 29px;
  line-height: 34px;
}
```
FILE: script.js
```js
const columns = ['A', 'B', 'C', 'D', 'E', 'F', 'G', 'H', 'I', 'J', 'K', 'L', 'M', 'N', 'O', 'P', 'Q', 'R', 'S', 'T', 'U', 'V', 'W', 'X', 'Y', 'Z', 'AA', 'AB'];
const dividers = ['G', 'O', 'U', 'AA'];
const colHeads = document.getElementById('col-heads');
const rowHeads = document.getElementById('row-heads');
const grid = document.getElementById('cells-grid');

function addLabel(parent, text, selected) {
  const label = document.createElement('span');
  label.textContent = text;
  if (selected) label.className = 'selected';
  parent.appendChild(label);
}

// Column headings and vertical gridlines
columns.forEach((name, i) => {
  addLabel(colHeads, name, name === 'B');
  const line = document.createElement('div');
  line.className = dividers.includes(name) ? 'col-line divider' : 'col-line';
  line.style.gridColumn = i + 1;
  grid.appendChild(line);
});

// Row headings and horizontal gridlines
for (let row = 1; row <= 36; row++) {
  addLabel(rowHeads, row, row === 3);
  const line = document.createElement('div');
  line.className = 'row-line';
  line.style.gridRow = row;
  grid.appendChild(line);
}
```
